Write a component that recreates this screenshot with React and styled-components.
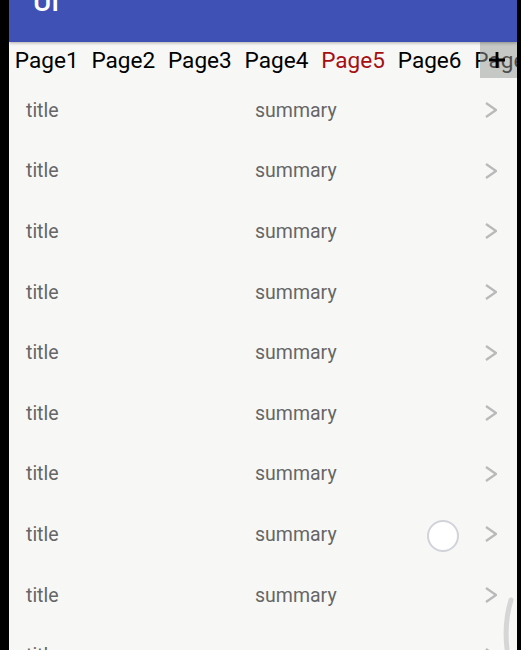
import React from 'react'
import styled, { createGlobalStyle } from 'styled-components'

const GlobalStyle = createGlobalStyle`
    html, body {
        margin: 0;
        padding: 0;
        background: #000;
    }
    body {
        font-family: Roboto, "Noto Sans", sans-serif;
    }
`

const Screen = styled.div`
    position: relative;
    margin: 0 4px 0 9px;
    height: 650px;
    overflow: hidden;
    background: #f7f8f6;
`

const AppBar = styled.header`
    position: relative;
    z-index: 2;
    display: flow-root;
    height: 42px;
    padding-left: 24px;
    background: #3f51b5;
    box-shadow: 0 1px 3px rgba(0, 0, 0, 0.3);
`

const AppTitle = styled.div`
    margin-top: -12px;
    color: #fff;
    font-size: 28px;
    font-weight: 500;
    line-height: 28px;
`

const TabBar = styled.nav`
    position: relative;
    display: flex;
    height: 38px;
    overflow: hidden;
    white-space: nowrap;
`

const Tab = styled.div`
    flex: none;
    padding: 0 7px 0 5.8px;
    font-size: 22.6px;
    line-height: 38px;
    color: ${(props) => (props.active ? '#a50f12' : '#000')};
`

const AddButton = styled.div`
    position: absolute;
    top: 0;
    right: 0;
    width: 37px;
    height: 36px;
    display: flex;
    align-items: center;
    justify-content: center;
    padding-right: 3px;
    box-sizing: border-box;
    background: rgba(150, 152, 150, 0.5);
`

const List = styled.div`
    position: relative;
`

const Row = styled.div`
    display: grid;
    grid-template-columns: 229px 1fr 12px;
    align-items: center;
    height: 60.6px;
    padding: 0 20px 0 17px;
    font-size: 19.5px;
    color: #666;
`

const Title = styled.span``

const Summary = styled.span``

const Ripple = styled.div`
    position: absolute;
    left: 418px;
    top: 440px;
    width: 28px;
    height: 28px;
    border: 2px solid #d2d3da;
    border-radius: 50%;
    background: #fff;
`

const Glow = styled.svg`
    position: absolute;
    right: 0;
    top: 597px;
`

function Chevron() {
    return (
        <svg width="12" height="16" viewBox="0 0 12 16">
            <polyline
                points="1,1 11,8 1,15"
                fill="none"
                stroke="#b9b9b9"
                strokeWidth="2.2"
            />
        </svg>
    )
}

function App() {
    const tabs = ['Page1', 'Page2', 'Page3', 'Page4', 'Page5', 'Page6', 'Page7', 'Page8']
    const rows = []
    for (let i = 0; i < 10; i++) {
        rows.push(
            <Row key={i}>
                <Title>title</Title>
                <Summary>summary</Summary>
                <Chevron />
            </Row>
        )
    }
    return (
        <>
            <GlobalStyle />
            <Screen>
                <AppBar>
                    <AppTitle>UI</AppTitle>
                </AppBar>
                <TabBar>
                    {tabs.map((t) => (
                        <Tab key={t} active={t === 'Page5'}>
                            {t}
                        </Tab>
                    ))}
                    <AddButton>
                        <svg width="18" height="18" viewBox="0 0 18 18">
                            <path d="M9 1v16M1 9h16" stroke="#000" strokeWidth="2.8" />
                        </svg>
                    </AddButton>
                </TabBar>
                <List>
                    {rows}
                    <Ripple />
                </List>
                <Glow width="16" height="56" viewBox="0 0 16 56">
                    <path
                        d="M10 3 Q3 26 6 52"
                        fill="none"
                        stroke="#d6d6d6"
                        strokeWidth="5"
                        strokeLinecap="round"
                    />
                </Glow>
            </Screen>
        </>
    )
}

export default App
